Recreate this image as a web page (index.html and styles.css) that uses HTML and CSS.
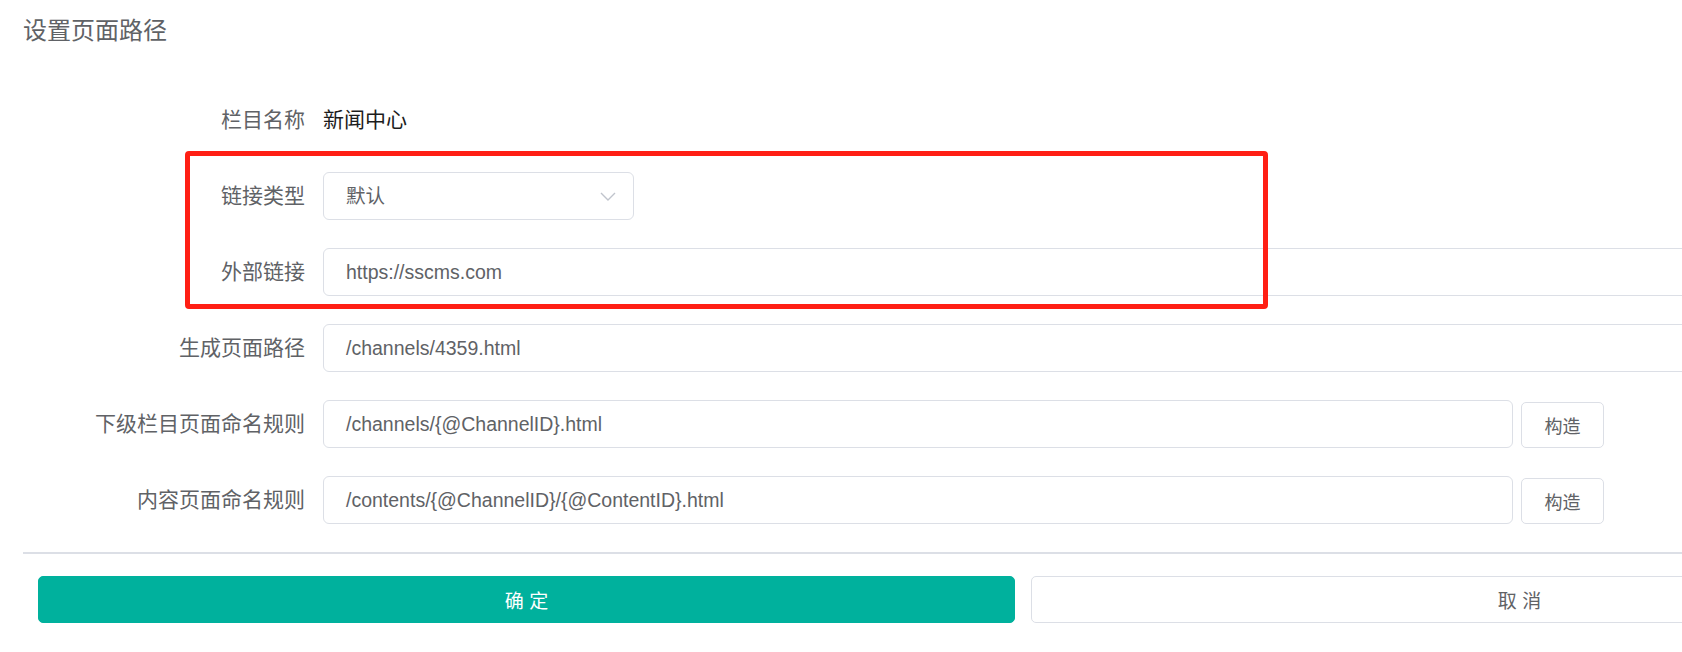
FILE: index.html
```html
<!DOCTYPE html>
<html>
   <head>
      <meta charset="UTF-8">
      <title>设置页面路径</title>
      <link rel="stylesheet" href="styles.css">
   </head>
   <body>
      <div class="page">
         <h1 class="title">设置页面路径</h1>

         <div class="form">
            <div class="row">
               <label class="label">栏目名称</label>
               <div class="text-value">新闻中心</div>
            </div>

            <div class="marked">
               <div class="row">
                  <label class="label">链接类型</label>
                  <div class="select">
                     <span>默认</span>
                     <svg class="arrow" width="16" height="9" viewBox="0 0 16 9">
                        <path d="M1 1 L8 8 L15 1" fill="none" stroke="#c0c4cc" stroke-width="1.4"/>
                     </svg>
                  </div>
               </div>
               <div class="row">
                  <label class="label">外部链接</label>
                  <div class="input wide">https://sscms.com</div>
               </div>
               <div class="mark"></div>
            </div>

            <div class="row">
               <label class="label">生成页面路径</label>
               <div class="input wide">/channels/4359.html</div>
            </div>
            <div class="row">
               <label class="label">下级栏目页面命名规则</label>
               <div class="input rule">/channels/{@ChannelID}.html</div>
               <button class="btn-small">构造</button>
            </div>
            <div class="row">
               <label class="label">内容页面命名规则</label>
               <div class="input rule">/contents/{@ChannelID}/{@ContentID}.html</div>
               <button class="btn-small">构造</button>
            </div>
         </div>

         <div class="footer">
            <button class="btn btn-primary">确 定</button>
            <button class="btn btn-default">取 消</button>
         </div>
      </div>
   </body>
</html>
```

FILE: styles.css
```css
*
{
   box-sizing: border-box;
}

body
{
   margin: 0;
   overflow: hidden;
   background: #ffffff;
   font-family: "Liberation Sans", "Noto Sans CJK SC", sans-serif;
   color: #606266;
}

.page
{
   width: 2023px;
   padding: 15px 0 0 23px;
}

.title
{
   margin: 0;
   font-size: 24px;
   font-weight: normal;
   line-height: 32px;
   color: #606266;
}

.form
{
   margin-top: 49px;
}

.row
{
   display: flex;
   align-items: center;
   height: 48px;
   margin-bottom: 28px;
}

.label
{
   flex: none;
   width: 300px;
   padding-right: 18px;
   text-align: right;
   font-size: 21px;
   line-height: 48px;
   color: #606266;
}

.text-value
{
   font-size: 21px;
   line-height: 48px;
   color: #1c1c1c;
}

.input,
.select
{
   height: 48px;
   padding: 0 22px;
   border: 1px solid #dcdfe6;
   border-radius: 6px;
   font-size: 19.5px;
   line-height: 46px;
   color: #606266;
   white-space: nowrap;
}

.wide
{
   flex: 1;
}

.rule
{
   width: 1190px;
}

.select
{
   display: flex;
   justify-content: space-between;
   align-items: center;
   width: 311px;
   padding-right: 17px;
}

.marked
{
   position: relative;
}

.mark
{
   position: absolute;
   left: 162px;
   top: -21px;
   width: 1083px;
   height: 158px;
   border: 5px solid #ff1f14;
   border-radius: 4px;
   pointer-events: none;
}

.btn-small
{
   height: 46px;
   width: 83px;
   margin-left: 8px;
   margin-top: 2px;
   border: 1px solid #dcdfe6;
   border-radius: 5px;
   background: #ffffff;
   font-family: inherit;
   font-size: 18px;
   color: #606266;
}

.footer
{
   display: flex;
   gap: 16px;
   padding: 22px 15px 0;
   border-top: 2px solid #dcdfe6;
}

.btn
{
   flex: 1;
   height: 47px;
   border-radius: 5px;
   font-family: inherit;
   font-size: 19px;
}

.btn-primary
{
   border: 1px solid #00b19d;
   background: #00b19d;
   color: #ffffff;
}

.btn-default
{
   border: 1px solid #dcdfe6;
   background: #ffffff;
   color: #606266;
}
```
